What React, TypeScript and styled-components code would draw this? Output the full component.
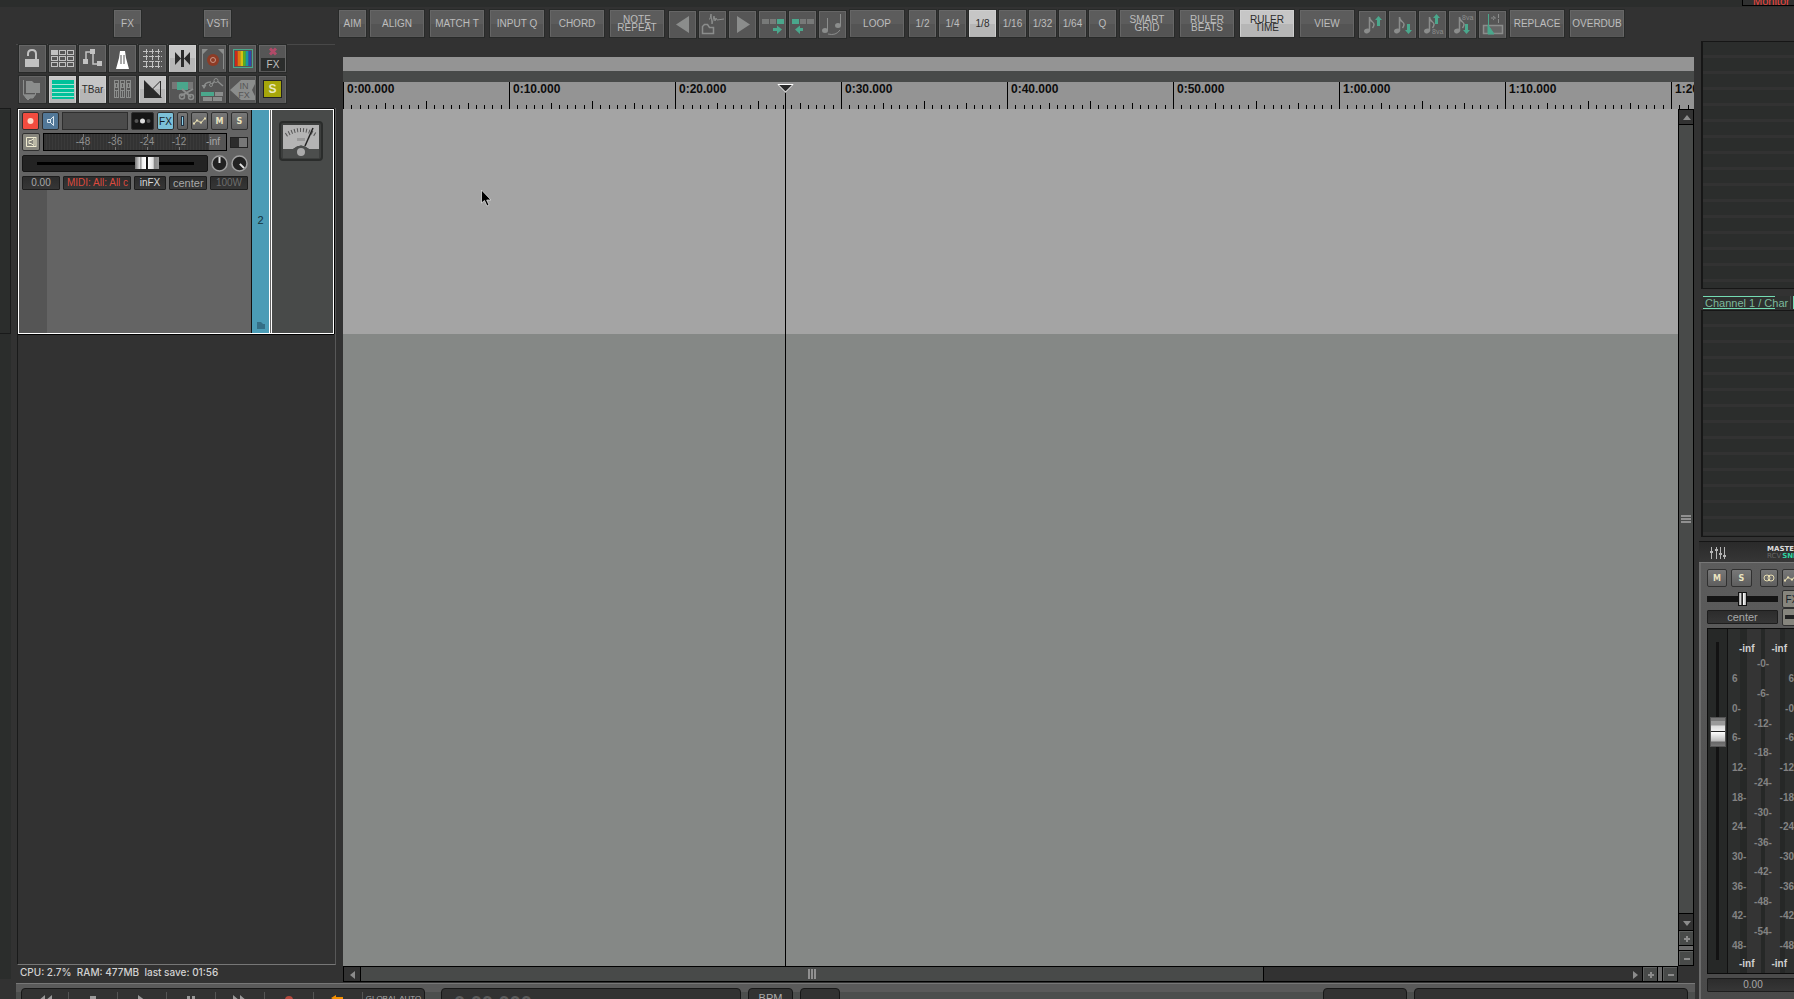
import React from "react";
import styled, { createGlobalStyle, css } from "styled-components";

const sans = '"Liberation Sans", Arial, sans-serif';

const Global = createGlobalStyle`
  *, *::before, *::after { box-sizing: border-box; }
  html, body { margin: 0; background: #323232; }
  body { font-family: ${sans}; overflow: hidden; }
  button, input { font-family: inherit; }
  svg { display: block; flex: none; }
`;

/* ---------- page frame ---------- */
const Page = styled.div`
  display: flex;
  flex-direction: column;
  height: 100vh;
  overflow: hidden;
  background: #323232;
`;
const TopStrip = styled.div`
  flex: none;
  display: flex;
  justify-content: flex-end;
  height: 7px;
  background: #2b2d2c;
`;
const MonitorTag = styled.div`
  width: 52px;
  height: 6px;
  padding-left: 10px;
  overflow: hidden;
  display: flex;
  align-items: flex-end;
  border: 1px solid #000;
  border-width: 0 0 1px 1px;
  background: #303131;
  color: #f0443c;
  font-size: 11px;
  line-height: 8px;
`;
const Body = styled.div`
  flex: 1;
  min-height: 0;
  display: flex;
`;
const Edge = styled.div`
  flex: none;
  width: 16px;
  padding-top: 67px;
`;
const EdgeTrack = styled.div`
  width: 11px;
  height: 226px;
  background: #2b2d2c;
  border: 1px solid #191a1a;
  border-width: 1px 1px 1px 0;
`;
const EdgeRest = styled.div`
  width: 11px;
  height: calc(100% - 246px);
  background: #2b2d2c;
`;
const Center = styled.div`
  flex: 1;
  min-width: 0;
  display: flex;
  flex-direction: column;
`;
const Main = styled.div`
  flex: 1;
  min-height: 0;
  display: flex;
`;

/* ---------- toolbar buttons ---------- */
const Toolbar = styled.div`
  flex: none;
  display: flex;
  align-items: flex-start;
  height: 34px;
  padding: 3px 0 0 113px;
`;
const Group = styled.div<{ $after?: number }>`
  display: flex;
  margin-right: ${(p) => p.$after ?? 0}px;
`;
const ToolButton = styled.button<{ $wide?: boolean; $on?: boolean; $icon?: boolean }>`
  flex: none;
  width: ${(p) => (p.$wide ? 54 : 27)}px;
  height: 27px;
  margin: ${(p) => (p.$wide ? "0 4px 0 2px" : p.$icon ? "1px 2px 0 1px" : "0 2px 0 1px")};
  padding: 0;
  border: 1px solid ${(p) => (p.$on ? "#cfcfcf" : "#666")};
  border-bottom-color: ${(p) => (p.$on ? "#b4b4b4" : "#585858")};
  box-shadow: 0 0 0 1px #282a29;
  background: ${(p) =>
    p.$on
      ? "linear-gradient(#c6c6c6 50%, #b6b6b6 50%)"
      : p.$icon
        ? "#565656"
        : "linear-gradient(#5c5c5c 50%, #545454 50%)"};
  color: ${(p) => (p.$on ? "#2c2c2c" : "#bdbdbd")};
  font-size: 10px;
  line-height: 8px;
  display: flex;
  align-items: center;
  justify-content: center;
  text-align: center;
  overflow: hidden;
`;

/* ---------- track control panel ---------- */
const TrackColumn = styled.div`
  flex: none;
  width: 327px;
  display: flex;
  flex-direction: column;
`;
const IconGrid = styled.div`
  display: grid;
  grid-template-columns: repeat(9, 27px);
  grid-auto-rows: 27px;
  gap: 4px 3px;
  margin: 3px 8px 0 0;
  padding: 0 0 5px 3px;
  border-top: 1px solid #484848;
  button { margin: 0; }
`;
const TrackArea = styled.div`
  flex: 1;
  min-height: 0;
  margin: 0 7px 0 1px;
  width: 319px;
  border-right: 1px solid #585858;
  border-bottom: 1px solid #777;
  border-left: 1px solid #191a1a;
`;
const Track = styled.section`
  display: flex;
  height: 225px;
  width: 316px;
  border: 1px solid #fff;
  box-shadow: 0 -1px #111, 0 1px #000, 1px 0 #000;
  margin-top: 1px;
  background: #646464;
`;
const Controls = styled.div`
  width: 233px;
  padding: 2px 3px;
  display: flex;
  flex-direction: column;
  gap: 3px;
  border-right: 1px solid #111;
  background: linear-gradient(#646464, #646464) 28px 80px / 100% 100% no-repeat,
    linear-gradient(#555, #555) 0 80px / 100% 100% no-repeat, #646464;
`;
const Row = styled.div<{ $h: number; $gap: number }>`
  display: flex;
  align-items: center;
  height: ${(p) => p.$h}px;
  gap: ${(p) => p.$gap}px;
`;
const tones = {
  grey: "linear-gradient(#787878, #5e5e5e)",
  red: "#f14c3f",
  blue: "#527898",
  cyan: "#7cc0d8",
  dark: "#161616",
  sand: "#86857d",
};
const MiniButton = styled.button<{ $w: number; $tone?: keyof typeof tones }>`
  flex: none;
  width: ${(p) => p.$w}px;
  height: 18px;
  padding: 0;
  display: flex;
  align-items: center;
  justify-content: center;
  border: 1px solid #303030;
  border-radius: 2px;
  background: ${(p) => tones[p.$tone ?? "grey"]};
  color: ${(p) => (p.$tone === "cyan" || p.$tone === "sand" ? "#142028" : "#eae4c0")};
  font-size: ${(p) => (p.$tone ? 10 : 8)}px;
  font-family: ${(p) => (p.$tone ? sans : '"DejaVu Sans", sans-serif')};
  font-weight: ${(p) => (p.$tone ? "normal" : "bold")};
`;
const NameInput = styled.input`
  flex: none;
  width: 66px;
  height: 18px;
  border: 1px solid #2e2e2e;
  background: #4b4b4b;
  color: #ccc;
  font-size: 10px;
`;
const MeterBox = styled.div`
  flex: none;
  width: 184px;
  height: 18px;
  padding-right: 6px;
  display: flex;
  align-items: center;
  justify-content: flex-end;
  border: 1px solid #000;
  background: linear-gradient(90deg, transparent 165px, #555 165px) , repeating-linear-gradient(90deg, #333 0 2px, #3a3a3a 2px 3px);
  color: #909090;
  font-size: 10px;
  line-height: 16px;
  span {
    width: 32px;
    text-align: center;
    background: linear-gradient(#777 3px, transparent 3px 13px, #777 13px) center / 1px 100% no-repeat;
  }
  span:last-child { width: 25px; text-align: right; color: #a8a8a8; background: none; }
`;
const TogglePill = styled.button`
  width: 18px;
  height: 11px;
  padding: 0;
  border: 1px solid #222;
  background: linear-gradient(90deg, #2c2c2c 8px, #777 8px);
`;
const VolumeSlider = styled.input`
  flex: none;
  appearance: none;
  width: 186px;
  height: 17px;
  margin: 0;
  padding: 0 10px;
  border: 1px solid #151515;
  border-radius: 2px;
  background: linear-gradient(#000, #000) center / 157px 3px no-repeat, #232323;
  &::-webkit-slider-thumb {
    appearance: none;
    width: 24px;
    height: 12px;
    border: 0;
    background: linear-gradient(90deg, #777, #ddd 20%, #888 24%, #eee 30%, #fff 44%, #111 46% 52%, #fff 54%, #ddd 76%, #888 80%, #999);
  }
`;
const Field = styled.button<{ $w: number; $tint?: string; $size?: number }>`
  flex: none;
  width: ${(p) => p.$w}px;
  height: 14px;
  padding: 0 3px;
  overflow: hidden;
  white-space: nowrap;
  border: 1px solid #1d1d1d;
  border-radius: 1px;
  background: linear-gradient(#2c2c2c, #363636);
  color: ${(p) => p.$tint ?? "#a8a8a8"};
  font-size: ${(p) => p.$size ?? 10}px;
  line-height: 12px;
`;
const ColorBar = styled.div`
  width: 18px;
  display: flex;
  flex-direction: column;
  align-items: center;
  border-right: 1px solid #fff;
  background: #4b9cb6;
  color: #14323c;
  font-size: 11px;
  svg { margin-bottom: 4px; }
`;
const TrackNumber = styled.span`
  flex: 1;
  display: flex;
  align-items: center;
  padding-top: 8px;
`;
const TrackMeter = styled.div`
  flex: 1;
  display: flex;
  justify-content: center;
  align-items: flex-start;
  padding: 11px 3px 0 0;
  border-left: 1px solid #fff;
  margin-left: 1px;
  background: #484a49;
`;
const Status = styled.div`
  height: 18px;
  padding-left: 4px;
  font: 500 10px/14px Inter, sans-serif;
  color: #d2d2d2;
  white-space: pre;
`;

/* ---------- arrange view ---------- */
const Arrange = styled.div`
  flex: 1;
  min-width: 0;
  margin-right: 5px;
  padding-top: 16px;
  display: flex;
  flex-direction: column;
  overflow: hidden;
`;
const RegionLane = styled.div`
  flex: none;
  height: 14px;
  background: #949494;
`;
const MarkerLane = styled.div`
  flex: none;
  height: 11px;
  background: #484a49;
`;
const TimeView = styled.div`
  position: relative;
  flex: 1;
  min-height: 0;
  display: flex;
  flex-direction: column;
`;
const Ruler = styled.div`
  flex: none;
  height: 27px;
  display: flex;
  overflow: hidden;
  background: #949494;
`;
const RulerMark = styled.div`
  flex: none;
  width: 166px;
  display: flex;
  flex-direction: column;
  justify-content: space-between;
  border-left: 1px solid #000;
  color: #0c0c0c;
  font-size: 12px;
  font-weight: bold;
  line-height: 14px;
  span { padding-left: 3px; }
`;
const Lanes = styled.div`
  flex: 1;
  min-height: 0;
  display: flex;
`;
const Canvas = styled.div`
  flex: 1;
  min-width: 0;
  background: #858886;
`;
const Lane = styled.div`
  height: 225px;
  background: #a4a4a4;
`;
const Playhead = styled.div`
  position: absolute;
  left: 434px;
  top: 2px;
  bottom: 0;
  width: 17px;
  display: flex;
  flex-direction: column;
  align-items: center;
  &::after { content: ""; flex: 1; width: 1px; background: #000; }
`;
const Pointer = styled.svg`
  position: absolute;
  left: 138px;
  top: 107px;
`;
const VScroll = styled.div`
  flex: none;
  width: 16px;
  display: flex;
  flex-direction: column;
  border: 1px solid #000;
  background: #000;
  gap: 1px;
`;
const HScroll = styled.div`
  flex: none;
  height: 16px;
  margin: 0 16px 1px 0;
  display: flex;
  gap: 1px;
  border: 1px solid #000;
  background: #000;
`;
const ScrollButton = styled.button<{ $raised?: boolean; $tall?: boolean; $long?: boolean }>`
  flex: none;
  width: ${(p) => (p.$long ? 16 : 14)}px;
  height: ${(p) => (p.$tall ? 16 : 14)}px;
  padding: 0;
  border: 1px solid ${(p) => (p.$raised ? "#5e605f" : "#323232")};
  border-width: 1px 0 0 1px;
  background: ${(p) => (p.$raised ? "#484a49" : "#323232")};
  display: flex;
  align-items: center;
  justify-content: center;
`;
const Thumb = styled.div<{ $grow: number }>`
  flex: ${(p) => p.$grow} 1 0;
  display: flex;
  align-items: center;
  justify-content: center;
  background: #484a49;
`;
const Trough = styled.div<{ $grow: number }>`
  flex: ${(p) => p.$grow} 1 0;
  margin-right: -1px;
  background: #323232;
`;
const Nub = styled.div<{ $vertical?: boolean }>`
  flex: none;
  background: #6a6a6a;
  ${(p) => (p.$vertical ? css`height: 4px;` : css`width: 4px;`)}
`;

/* ---------- transport ---------- */
const Transport = styled.div`
  flex: none;
  height: 16px;
  margin-right: 4px;
  padding: 4px 7px 0 5px;
  display: flex;
  align-items: flex-start;
  gap: 7px;
  overflow: hidden;
  border-top: 1px solid #777;
  background: linear-gradient(#5a5a5a 8px, #4c4e4d 8px);
`;
const Pod = styled.div<{ $w?: number; $before?: number; $gapAuto?: boolean }>`
  flex: none;
  width: ${(p) => p.$w}px;
  height: 28px;
  margin-left: ${(p) => (p.$gapAuto ? "auto" : `${p.$before ?? 0}px`)};
  display: flex;
  justify-content: center;
  border: 1px solid #171717;
  border-radius: 4px;
  background: #323232;
  color: #aaa;
`;
const TransportButton = styled.button<{ $grow?: boolean }>`
  flex: ${(p) => (p.$grow ? "1" : "none")};
  width: 49px;
  height: 24px;
  margin-top: 3px;
  padding: ${(p) => (p.$grow ? 1 : 3)}px 0 0;
  border: 0;
  border-left: 1px solid #555;
  background: none;
  color: #aaa;
  font-size: 8px;
  line-height: 12px;
  white-space: nowrap;
  display: flex;
  align-items: flex-start;
  justify-content: center;
  &:first-child { border-left: 0; width: 46px; }
`;
const Clock = styled.span`
  flex: 1;
  padding: 2px 0 0 12px;
  font-size: 20px;
  line-height: 24px;
  color: #5c5c5c;
  font-weight: bold;
`;
const Tempo = styled.span`
  padding-top: 3px;
  font-size: 11px;
  line-height: 12px;
`;

/* ---------- mixer dock ---------- */
const Dock = styled.aside`
  flex: none;
  width: 95px;
  display: flex;
  flex-direction: column;
  overflow: hidden;
  background: #323232;
`;
const Slots = styled.div<{ $h?: number }>`
  ${(p) => (p.$h ? css`height: ${p.$h}px; flex: none;` : css`flex: 1;`)}
  margin-left: 2px;
  border: 1px solid #161616;
  border-width: 1px 0 1px 2px;
  background: repeating-linear-gradient(#2b2d2c 0 13px, #323232 13px 16px);
`;
const SendRow = styled.div`
  flex: none;
  height: 13px;
  margin: 7px 0 1px 4px;
  display: flex;
  gap: 2px;
`;
const SendButton = styled.button`
  width: 88px;
  padding: 0 2px;
  border: 0;
  border-right: 1px solid #484a49;
  background: linear-gradient(#74dcb4, #74dcb4) 0 0 / 72px 1px no-repeat,
    linear-gradient(#74dcb4, #74dcb4) 0 100% / 72px 1px no-repeat, #2e302f;
  color: #7cb89c;
  font-size: 11px;
  line-height: 12px;
  text-align: left;
  white-space: nowrap;
  overflow: hidden;
`;
const NextSend = styled.div`
  width: 1px;
  background: #74dcb4;
`;
const MasterHead = styled.div`
  flex: none;
  height: 22px;
  margin-top: 4px;
  padding: 2px 0 0 11px;
  display: flex;
  align-items: center;
  gap: 41px;
  border-top: 1px solid #151515;
  border-bottom: 1px solid #777;
  background: linear-gradient(#2a2a2a, #363636);
`;
const MasterText = styled.div`
  width: 40px;
  flex: none;
  color: #dcdcdc;
  font: bold 7px/7px "DejaVu Sans", sans-serif;
  em { font-style: normal; color: #666; font-weight: normal; }
  b { color: #2ed2a0; padding-left: 1px; }
`;
const Strip = styled.div`
  flex: none;
  height: 436px;
  padding: 6px 0 0 6px;
  border-left: 2px solid #6c6c6c;
  background: linear-gradient(#5c5c5c, #4a4a4a);
  display: flex;
  flex-direction: column;
`;
const StripRow = styled.div<{ $h: number }>`
  flex: none;
  display: flex;
  align-items: center;
  height: ${(p) => p.$h}px;
  gap: 4px;
`;
const Pair = styled.div`
  flex: none;
  display: flex;
  gap: 4px;
  margin-right: 4px;
`;
const PanSlider = styled.input`
  flex: none;
  appearance: none;
  width: 71px;
  height: 14px;
  margin: 0;
  background: linear-gradient(#141414, #141414) center / 100% 6px no-repeat;
  &::-webkit-slider-thumb {
    appearance: none;
    width: 9px;
    height: 14px;
    border: 1px solid #111;
    background: linear-gradient(90deg, #999, #fff 35%, #222 36% 60%, #fff 61%, #aaa);
  }
`;
const MeterPanel = styled.div`
  flex: none;
  width: 100px;
  height: 346px;
  margin-top: 5px;
  display: flex;
  border: 1px solid #0c0c0c;
  background: #2a2c2b;
`;
const MasterFader = styled.input`
  flex: none;
  appearance: none;
  writing-mode: vertical-lr;
  direction: rtl;
  width: 20px;
  height: 100%;
  margin: 0;
  border-right: 1px solid #111;
  background: linear-gradient(#121212, #121212) center / 3px 318px no-repeat, #262827;
  &::-webkit-slider-thumb {
    appearance: none;
    width: 16px;
    height: 30px;
    border: 1px solid #555;
    background: linear-gradient(#777 0 3px, #999 3px 7px, #ddd 8px, #eee 13px, #222 13px 14px, #fff 14px, #bbb 23px, #666 24px, #777);
  }
`;
const Scales = styled.div`
  display: flex;
  width: 76px;
  flex: none;
  color: #838383;
  font-size: 10px;
  font-weight: bold;
  line-height: 12px;
  background: linear-gradient(90deg, #2d2f2e 12px, #262827 12px 19px, #343434 19px 33px, #262827 33px 37px, #343434 37px 52px, #262827 52px 57px, #2d2f2e 57px);
`;
const Scale = styled.div<{ $end?: boolean }>`
  flex: none;
  width: ${(p) => (p.$end ? 7 : 11)}px;
  padding: 44px 0 21px ${(p) => (p.$end ? 0 : 4)}px;
  display: flex;
  flex-direction: column;
  justify-content: space-between;
  align-items: ${(p) => (p.$end ? "flex-end" : "flex-start")};
  white-space: nowrap;
`;
const PeakColumn = styled.div`
  flex: none;
  width: 48px;
  display: flex;
  flex-direction: column;
  justify-content: space-between;
  padding: 14px 0 3px;
`;
const Peaks = styled.div`
  display: flex;
  justify-content: space-between;
  color: #d0d0d0;
`;
const Steps = styled.div`
  flex: 1;
  display: flex;
  flex-direction: column;
  justify-content: space-between;
  align-items: center;
  padding: 3px 0 20px;
`;

/* ---------- icons ---------- */
const G = "#c2c2c2";
const D = "#8b8d8c";
const T = "#4aa78c";

const Icon = ({ children, size = 27 }: { children: React.ReactNode; size?: number }) => (
  <svg width={size} height={size} viewBox={`0 0 ${size} ${size}`} fill="none" aria-hidden="true">
    {children}
  </svg>
);

const icons: Record<string, React.ReactNode> = {
  lock: (<><path d="M9 11V9q0-4 4-4t4 4v6" stroke={G} strokeWidth="2" /><path d="M6 14h14v8H6z" fill={G} /></>),
  matrix: (
    <g stroke={G} shapeRendering="crispEdges">
      {[0, 1, 2].map((r) => [0, 1, 2].map((c) => (
        <rect key={`${r}${c}`} x={2.5 + c * 8} y={5.5 + r * 6} width="6" height="4" fill={r === 0 && c === 0 ? G : "none"} />
      )))}
    </g>
  ),
  routing: (<><path d="M7 14V7h5M14 8v11h6" stroke={G} strokeWidth="1.500" /><path d="M11 4h5v5h-5zM4 14h5v5H4zM18 16h5v5h-5z" fill={G} /></>),
  metronome: (<><path d="M11 6h5l1 7 3 11H7l3-11z" fill="#fff" /><path d="M12 10v9M15 10v9" stroke="#555" strokeWidth="1" /></>),
  gridlines: (<path d="M4 6.500h19M4 11.500h19M4 16.500h19M4 21.500h19M7.500 4v19M13.500 4v19M19.500 4v19" stroke={G} strokeDasharray="5 1" shapeRendering="crispEdges" />),
  snap: (<path d="M12 5h3v17h-3zM6 7l6 6.500L6 20zM21 7l-6 6.500 6 6.500z" fill="#2a2a2a" />),
  record: (<><circle cx="14" cy="15" r="6" fill="#8e3c26" /><circle cx="14" cy="15" r="2.500" stroke="#c8988a" /><path d="M3.500 24V4.500M24.500 24V4.500" stroke={D} /><path d="M3 4h6l-6 6zM25 4h-6l6 6z" fill={D} /></>),
  rainbow: (
    <><rect x="4.500" y="4.500" width="19" height="18" stroke={T} />
      {["#d02818", "#e07810", "#d8c010", "#58b020", "#1898a0", "#3048b0"].map((c, i) => (
        <rect key={c} x={6 + i * 2.7} y="6" width="2.700" height="15" fill={c} />
      ))}</>
  ),
  fxoff: (<><path d="M11 3.500l6 6M17 3.500l-6 6" stroke="#b04a68" strokeWidth="3" /><path d="M2 13h24v13H2z" fill="#2b2d2c" /><text x="14" y="23" fontSize="10" textAnchor="middle" fill="#c0c0c0">FX</text></>),
  folder: (<><path d="M7 5h6l2 2h6v10H7z" fill="#8b8d8c" /><path d="M4.500 4v15h12V17M5 19h11l-2 3h-3l-2 2-2-2z" stroke={D} fill="none" /><path d="M5 19h11l-2 3h-3l-2 2-2-2z" fill={D} /></>),
  list: (<><path d="M3 4h22v19H3z" fill="#00c19a" /><path d="M3 8.500h22M3 12.500h22M3 16.500h22M3 20.500h22" stroke="#a8e4d4" shapeRendering="crispEdges" /></>),
  mixers: (<g stroke={D} shapeRendering="crispEdges">{[5.5, 11.5, 17.5].map((x) => (<React.Fragment key={x}><rect x={x} y="4.500" width="4" height="17" /><rect x={x + 1} y="7.500" width="2" height="4" /><path d={`M${x} 14.500h4M${x + 2} 15v6`} /></React.Fragment>))}</g>),
  fade: (<><path d="M5 4v18h18z" fill="#2a2a2a" /><path d="M21.500 5v16L13.500 13z" stroke="#2a2a2a" /></>),
  cut: (<><path d="M3 6h5v7H3zM19 6h5v7h-5z" fill="#777" /><path d="M8 6h11v8H8z" fill={T} /><path d="M12 20l12-7M22 21l-9-8" stroke={D} strokeWidth="2" /><circle cx="13" cy="20.500" r="2.500" stroke={D} strokeWidth="1.500" /><circle cx="22" cy="21" r="2.500" stroke={D} strokeWidth="1.500" /></>),
  envmove: (<><path d="M5 12q0-6 7-6M12 9l5-5 7 6" stroke={D} strokeWidth="1.500" /><circle cx="17" cy="4.500" r="2" stroke={D} fill="#565656" /><circle cx="12" cy="9" r="1.500" stroke={D} fill="#565656" /><path d="M2.500 9h5L5 13z" fill={D} /><path d="M2 16h13v4H2z" fill={T} /><path d="M16 16h8v4h-8zM4 21h9v4H4zM14 21h9v4h-9z" fill={D} /></>),
  infx: (<><path d="M1 14L12 4h16l-5 10 5 10H12z" fill="#8b8d8c" /><text x="15" y="13" fontSize="9" textAnchor="middle" fill="#565656">IN</text><text x="15" y="22" fontSize="9" textAnchor="middle" fill="#565656">FX</text></>),
  solo: (<><rect x="4.500" y="4.500" width="18" height="17" fill="#a6a60a" stroke="#222" /><text x="13.500" y="17" fontSize="12" fontWeight="bold" textAnchor="middle" fill="#e8e8c0">S</text></>),
  prev: (<path d="M20 5v17L7 13.500z" fill={D} />),
  next: (<path d="M8 5v17l13-8.500z" fill={D} />),
  wavefolder: (<><path d="M10 8h1l1-5 1 10 2-8 1 5 1-3 1 2 7-1" stroke={D} /><path d="M3.500 22.500v-7l2-2h3l2 3h4v6z" stroke={D} strokeWidth="1.500" /></>),
  moveright: (<><path d="M3 8h7v5H3zM11 8h6v5h-6z" fill="#787a79" /><path d="M18 8h7v5h-7z" fill={T} /><path d="M14 17h4v-2.500l5 4-5 4.500v-3h-4z" fill={T} /></>),
  moveleft: (<><path d="M3 8h7v5H3z" fill={T} /><path d="M11 8h6v5h-6zM18 8h7v5h-7z" fill="#787a79" /><path d="M14 17h-3v-2.500l-5 4 5 4.500v-3h3z" fill={T} /></>),
  legato: (<><ellipse cx="6" cy="19.500" rx="3" ry="2.500" fill={D} /><ellipse cx="19" cy="14.500" rx="3" ry="2.500" fill={D} /><path d="M8.500 19V7M21.500 14V3M9 23q8 2 12-4" stroke={D} /></>),
};

const Note = () => (<><ellipse cx="8" cy="20" rx="3" ry="2.300" fill={D} transform="rotate(-20 8 20)" /><path d="M10.500 20V6q0 3 3 5t0 6" stroke={D} strokeWidth="1.500" /></>);
const NoteArrow = ({ down, oct }: { down?: boolean; oct?: boolean }) => {
  const x = oct ? 17 : 19;
  const y = down ? 13 : oct ? 3 : 5;
  return (
    <Icon>
      <Note />
      {down
        ? <path d={`M${x - 1} ${y}h3v6h2l-3.500 4-3.500-4h2z`} fill={T} />
        : <path d={`M${x - 1} ${y + 10}h3v-6h2l-3.500-4-3.500 4h2z`} fill={T} />}
      {oct && <text x="13" y={down ? 9 : 23} fontSize="7" fill={D}>8va</text>}
    </Icon>
  );
};
const SplitIcon = () => (
  <Icon>
    <path d="M4.500 14.500h19v8h-19z" stroke={D} strokeWidth="1.500" fill="#666" />
    <path d="M9.500 3v20M9 14l6 9H9z" stroke={T} fill={T} strokeWidth="1" />
    <path d="M12 7h4M14 5l2.500 2-2.500 2M19.500 3v9" stroke={D} strokeDasharray="4 1" />
  </Icon>
);

const VuMeter = () => (
  <svg width="44" height="40" viewBox="0 0 44 40" aria-hidden="true">
    <rect x="1" y="1" width="42" height="38" rx="3" fill="#3c3e3d" stroke="#2a2c2b" strokeWidth="2" />
    <path d="M4 4h36v24H30q-8-7-16 0H4z" fill="#b4b4b4" />
    <path d="M7 14Q22 4 37 14" stroke="#555" strokeWidth="4" strokeDasharray="1 2" fill="none" />
    <path d="M26 25L34 7" stroke="#222" strokeWidth="1.500" />
    <path d="M18 17h8v3h-8z" fill="#999" />
    <path d="M4 28h10q8-7 16 0h10v9H4z" fill="#4c4e4d" />
    <circle cx="22" cy="31" r="4" fill="#aaa" />
  </svg>
);
const Knob = ({ angle }: { angle: number }) => (
  <svg width="17" height="17" viewBox="0 0 17 17" aria-hidden="true">
    <circle cx="8.500" cy="8.500" r="7.500" fill="#222" stroke="#a0a0a0" strokeWidth="1.500" />
    <path d="M8.500 2v6" stroke="#e4e4e4" strokeWidth="2" transform={`rotate(${angle} 8.500 8.500)`} />
  </svg>
);
const EnvelopeGlyph = () => (
  <svg width="14" height="10" viewBox="0 0 14 10" fill="none" stroke="#e6dcb0" aria-hidden="true">
    <path d="M1 8l3-4 4 3 4-5" /><path d="M0 7.500h2M3 4.500h2M7 6.500h2M11 2.500h2" strokeWidth="2" />
  </svg>
);
const Grip = ({ vertical }: { vertical?: boolean }) => (
  <svg width="10" height="10" viewBox="0 0 10 10" stroke="#909090" strokeWidth="2" shapeRendering="crispEdges" aria-hidden="true">
    <path d={vertical ? "M0 2h10M0 5h10M0 8h10" : "M2 0v10M5 0v10M8 0v10"} />
  </svg>
);
const Arrow = ({ d }: { d: string }) => (
  <svg width="8" height="8" viewBox="0 0 8 8" fill="#8c8c8c" aria-hidden="true"><path d={d} /></svg>
);
const PLUS = "M3 1h2v2h2v2H5v2H3V5H1V3h2z";
const MINUS = "M1 3h6v2H1z";

const TickMarks = () => (
  <svg width="165" height="8" viewBox="1 0 165 8" shapeRendering="crispEdges" aria-hidden="true">
    {Array.from({ length: 19 }, (_, i) => {
      const k = i + 1;
      const h = k === 10 ? 8 : k % 5 === 0 ? 6 : 4;
      return <rect key={k} x={Math.round(k * 8.3)} y={8 - h} width="1" height={h} fill="#000" />;
    })}
  </svg>
);

const tb = (label: React.ReactNode, opts: { wide?: boolean; on?: boolean } = {}) => (
  <ToolButton $wide={opts.wide} $on={opts.on}>{label}</ToolButton>
);
const IconButton = ({ name, on }: { name: string; on?: boolean }) => (
  <ToolButton $icon $on={on} aria-label={name}><Icon>{icons[name]}</Icon></ToolButton>
);

const leftIcons: [string, boolean?][] = [
  ["lock"], ["matrix"], ["routing"], ["metronome"], ["gridlines"], ["snap", true], ["record"], ["rainbow"], ["fxoff"],
  ["folder"], ["list", true], ["TBar", true], ["mixers"], ["fade", true], ["cut"], ["envmove"], ["infx"], ["solo"],
];
const times = ["0:00.000", "0:10.000", "0:20.000", "0:30.000", "0:40.000", "0:50.000", "1:00.000", "1:10.000", "1:20.000"];
const outerScale = ["6", "0", "6", "12", "18", "24", "30", "36", "42", "48"];
const innerScale = [0, 6, 12, 18, 24, 30, 36, 42, 48, 54];

const transportIcons: [string, React.ReactNode][] = [
  ["Rewind", <path key="a" d="M9 0v12L2 6zM16 0v12L9 6z" fill="#999" />],
  ["Stop", <path key="a" d="M6 1h6v10H6z" fill="#999" />],
  ["Play", <path key="a" d="M5 0v12l8-6z" fill="#999" />],
  ["Pause", <path key="a" d="M5 1h3v10H5zM10 1h3v10h-3z" fill="#999" />],
  ["Forward", <path key="a" d="M2 0v12l7-6zM9 0v12l7-6z" fill="#999" />],
  ["Record", <circle key="a" cx="9" cy="5" r="4" fill="#b5483c" />],
  ["Repeat", <path key="a" d="M2 3l5-3v2h7v2H7v2zM14 5v5H5" fill="#f59000" />],
];

export default function App() {
  return (
    <Page>
      <Global />
      <TopStrip><MonitorTag>Monitor</MonitorTag></TopStrip>
      <Toolbar>
        <Group $after={60}>{tb("FX")}</Group>
        <Group $after={105}>{tb("VSTi")}</Group>
        <Group>
          {tb("AIM")}
          {tb("ALIGN", { wide: true })}
          {tb("MATCH T", { wide: true })}
          {tb("INPUT Q", { wide: true })}
          {tb("CHORD", { wide: true })}
          {tb(<>NOTE<br />REPEAT</>, { wide: true })}
        </Group>
        <Group>
          {["prev", "wavefolder", "next", "moveright", "moveleft", "legato"].map((n) => <IconButton key={n} name={n} />)}
        </Group>
        <Group>
          {tb("LOOP", { wide: true })}
          {tb("1/2")}{tb("1/4")}{tb("1/8", { on: true })}{tb("1/16")}{tb("1/32")}{tb("1/64")}{tb("Q")}
        </Group>
        <Group>
          {tb(<>SMART<br />GRID</>, { wide: true })}
          {tb(<>RULER<br />BEATS</>, { wide: true })}
          {tb(<>RULER<br />TIME</>, { wide: true, on: true })}
          {tb("VIEW", { wide: true })}
        </Group>
        <Group>
          <ToolButton $icon aria-label="Note up"><NoteArrow /></ToolButton>
          <ToolButton $icon aria-label="Note down"><NoteArrow down /></ToolButton>
          <ToolButton $icon aria-label="Octave up"><NoteArrow oct /></ToolButton>
          <ToolButton $icon aria-label="Octave down"><NoteArrow down oct /></ToolButton>
          <ToolButton $icon aria-label="Split"><SplitIcon /></ToolButton>
          {tb("REPLACE", { wide: true })}
          {tb("OVERDUB", { wide: true })}
        </Group>
      </Toolbar>
      <Body>
        <Edge><EdgeTrack /><EdgeRest /></Edge>
        <Center>
          <Main>
            <TrackColumn>
              <IconGrid>
                {leftIcons.map(([n, on]) =>
                  n === "TBar" ? <ToolButton key={n} $on>TBar</ToolButton> : <IconButton key={n} name={n} on={on} />
                )}
              </IconGrid>
              <TrackArea>
                <Track>
                  <Controls>
                    <Row $h={18} $gap={3}>
                      <MiniButton $w={17} $tone="red" aria-label="Record arm">
                        <svg width="7" height="8" aria-hidden="true"><circle cx="3.500" cy="4" r="3" fill="#f8d8c8" /></svg>
                      </MiniButton>
                      <MiniButton $w={17} $tone="blue" aria-label="Monitor input">
                        <svg width="10" height="10" viewBox="0 0 10 10" fill="none" stroke="#dce8f0" aria-hidden="true"><path d="M1.500 3.500h3l3-3v9l-3-3h-3zM4.500 3v4" /></svg>
                      </MiniButton>
                      <NameInput aria-label="Track name" defaultValue="" />
                      <MiniButton $w={23} $tone="dark" aria-label="Routing">
                        <svg width="17" height="6" viewBox="0 0 17 6" aria-hidden="true"><circle cx="2.500" cy="3" r="2" fill="#555" /><circle cx="8.500" cy="3" r="2.500" fill="#ddd" /><circle cx="14.500" cy="3" r="2" fill="#555" /></svg>
                      </MiniButton>
                      <MiniButton $w={17} $tone="cyan">FX</MiniButton>
                      <MiniButton $w={11} aria-label="Bypass effects">
                        <svg width="3" height="10" aria-hidden="true"><path d="M0 0h3v10H0z" fill="#234" /><path d="M1 1h1v8H1z" fill="#8cd0e8" /></svg>
                      </MiniButton>
                      <MiniButton $w={17} aria-label="Envelopes"><EnvelopeGlyph /></MiniButton>
                      <MiniButton $w={17}>M</MiniButton>
                      <MiniButton $w={17}>S</MiniButton>
                    </Row>
                    <Row $h={18} $gap={3}>
                      <MiniButton $w={18} $tone="sand" aria-label="Record input">
                        <svg width="11" height="10" viewBox="0 0 11 10" fill="none" stroke="#f0ecd0" aria-hidden="true"><path d="M10 .500H.500v9H10M3 3.500h2l3-2v7l-3-2H3zM10 0v10" /></svg>
                      </MiniButton>
                      <MeterBox><span>-48</span><span>-36</span><span>-24</span><span>-12</span><span>-inf</span></MeterBox>
                      <TogglePill aria-label="Meter mode" />
                    </Row>
                    <Row $h={18} $gap={3}>
                      <VolumeSlider type="range" min={0} max={100} defaultValue={73} aria-label="Track volume" />
                      <Knob angle={0} />
                      <Knob angle={135} />
                    </Row>
                    <Row $h={16} $gap={3}>
                      <Field $w={38}>0.00</Field>
                      <Field $w={68} $tint="#dc4a3e">MIDI: All: All c</Field>
                      <Field $w={32} $tint="#d8d8d8">inFX</Field>
                      <Field $w={38} $size={11}>center</Field>
                      <Field $w={38} $tint="#6c6c6c">100W</Field>
                    </Row>
                  </Controls>
                  <ColorBar>
                    <TrackNumber>2</TrackNumber>
                    <svg width="8" height="8" aria-hidden="true"><path d="M0 1h4l2 2h2v5H0z" fill="#356f86" /></svg>
                  </ColorBar>
                  <TrackMeter><VuMeter /></TrackMeter>
                </Track>
              </TrackArea>
              <Status>CPU: 2.7%  RAM: 477MB  last save: 01:56</Status>
            </TrackColumn>
            <Arrange>
              <RegionLane />
              <MarkerLane />
              <TimeView>
                <Ruler>
                  {times.map((t) => <RulerMark key={t}><span>{t}</span><TickMarks /></RulerMark>)}
                </Ruler>
                <Lanes>
                  <Canvas><Lane /></Canvas>
                  <VScroll>
                    <ScrollButton aria-label="Scroll up"><Arrow d="M0 6l4-5 4 5z" /></ScrollButton>
                    <Thumb $grow={1}><Grip vertical /></Thumb>
                    <ScrollButton $tall aria-label="Scroll down"><Arrow d="M0 2l4 5 4-5z" /></ScrollButton>
                    <ScrollButton $raised aria-label="Zoom in vertically"><Arrow d={PLUS} /></ScrollButton>
                    <Nub $vertical />
                    <ScrollButton $raised aria-label="Zoom out vertically"><Arrow d={MINUS} /></ScrollButton>
                  </VScroll>
                </Lanes>
                <Playhead>
                  <svg width="17" height="9" viewBox="0 0 17 9" aria-hidden="true"><path d="M1 .500h15L8.500 8z" fill="#2a2a2a" stroke="#fff" /></svg>
                </Playhead>
                <Pointer width="12" height="18" viewBox="0 0 12 18" aria-hidden="true">
                  <path d="M.500 1v13l3-2.500L6 17l2-1-2.300-5H10z" fill="#000" stroke="#ddd" strokeWidth=".8" />
                </Pointer>
              </TimeView>
              <HScroll>
                <ScrollButton $long aria-label="Scroll left"><Arrow d="M6 0v8L1 4z" /></ScrollButton>
                <Thumb $grow={902}><Grip /></Thumb>
                <Trough $grow={362} />
                <ScrollButton $long aria-label="Scroll right"><Arrow d="M2 0v8l5-4z" /></ScrollButton>
                <ScrollButton $raised aria-label="Zoom in"><Arrow d={PLUS} /></ScrollButton>
                <Nub />
                <ScrollButton $raised aria-label="Zoom out"><Arrow d={MINUS} /></ScrollButton>
              </HScroll>
            </Arrange>
          </Main>
          <Transport>
            <Pod $w={404}>
              {transportIcons.map(([n, d]) => (
                <TransportButton key={n} aria-label={n}>
                  <svg width="18" height="12" viewBox="0 0 18 12" aria-hidden="true">{d}</svg>
                </TransportButton>
              ))}
              <TransportButton $grow>GLOBAL AUTO</TransportButton>
            </Pod>
            <Pod $w={300} $before={9}><Clock>0 00 000</Clock></Pod>
            <Pod $w={45}><Tempo>BPM</Tempo></Pod>
            <Pod $w={40} />
            <Pod $w={84} $gapAuto />
            <Pod $w={274} />
          </Transport>
        </Center>
        <Dock>
          <Slots $h={248} />
          <SendRow><SendButton>Channel 1 / Char</SendButton><NextSend /></SendRow>
          <Slots />
          <MasterHead>
            <svg width="16" height="14" viewBox="0 0 16 14" stroke="#b4b4b4" fill="#b4b4b4" aria-hidden="true">
              <path d="M1.500 1v12M6.500 1v12M10.500 1v12M14.500 1v12" /><path d="M0 5h3v2H0zM5 3h3v2H5zM9 7h3v2H9zM13 9h3v2h-3z" stroke="none" />
            </svg>
            <MasterText>MASTER<br /><em>RCV</em><b>SND</b></MasterText>
          </MasterHead>
          <Strip>
            <StripRow $h={18}>
              <Pair>
                <MiniButton $w={20}>M</MiniButton>
                <MiniButton $w={21}>S</MiniButton>
              </Pair>
              <MiniButton $w={18} aria-label="Mono">
                <svg width="12" height="8" viewBox="0 0 12 8" fill="none" stroke="#e6dcb0" aria-hidden="true"><circle cx="4" cy="4" r="3" /><circle cx="8" cy="4" r="3" /></svg>
              </MiniButton>
              <MiniButton $w={18} aria-label="Master envelopes"><EnvelopeGlyph /></MiniButton>
            </StripRow>
            <StripRow $h={24}>
              <PanSlider type="range" aria-label="Master pan" />
              <MiniButton $w={20} $tone="sand">FX</MiniButton>
            </StripRow>
            <StripRow $h={12}>
              <Field $w={71} $size={11}>center</Field>
              <MiniButton $w={20} $tone="sand" aria-label="Bypass master effects">
                <svg width="14" height="4" aria-hidden="true"><path d="M0 0h14v4H0z" fill="#222" /></svg>
              </MiniButton>
            </StripRow>
            <MeterPanel>
              <MasterFader type="range" min={0} max={100} defaultValue={72} aria-label="Master volume" />
              <Scales>
                <Scale>
                  {outerScale.map((v, i) => <span key={i}>{i ? `${v}-` : v}</span>)}
                </Scale>
                <PeakColumn>
                  <Peaks><span>-inf</span><span>-inf</span></Peaks>
                  <Steps>{innerScale.map((v) => <span key={v}>-{v}-</span>)}</Steps>
                  <Peaks><span>-inf</span><span>-inf</span></Peaks>
                </PeakColumn>
                <Scale $end>
                  {outerScale.map((v, i) => <span key={i}>{i ? `-${v}` : v}</span>)}
                </Scale>
              </Scales>
            </MeterPanel>
            <StripRow $h={22}>
              <Field $w={92}>0.00</Field>
            </StripRow>
          </Strip>
        </Dock>
      </Body>
    </Page>
  );
}
